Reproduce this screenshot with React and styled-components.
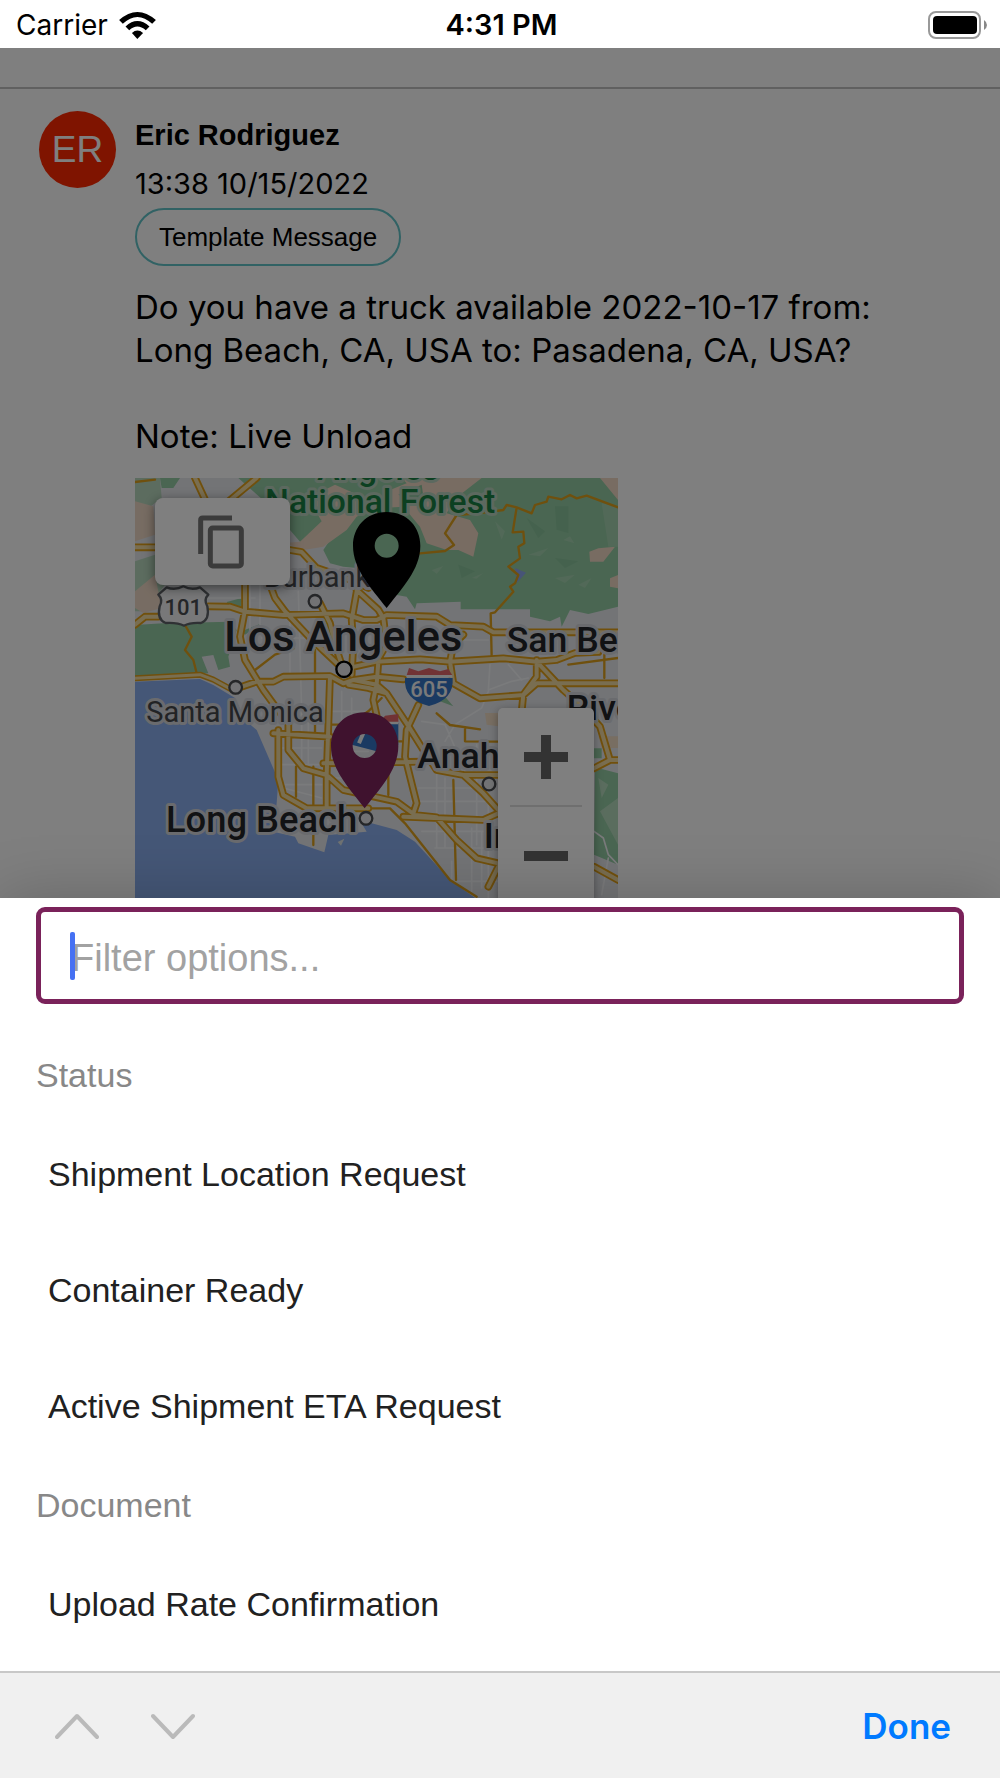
import React, { useState } from 'react';
import styled, { createGlobalStyle } from 'styled-components';

const GlobalStyle = createGlobalStyle`
  * { box-sizing: border-box; }
  body {
    margin: 0;
    background: #fff;
    font-family: "Liberation Sans", Arial, sans-serif;
  }
  button {
    border: none;
    background: none;
    padding: 0;
    font-family: inherit;
    cursor: pointer;
  }
  svg { display: block; }
`;

const Screen = styled.div`
  height: 100vh;
  display: flex;
  flex-direction: column;
  overflow: hidden;
`;

const StatusBar = styled.header`
  flex: none;
  display: grid;
  grid-template-columns: 1fr auto 1fr;
  align-items: center;
  height: 48px;
  padding: 2px 13px 0 16px;
  background: #fff;
  font-family: Inter, sans-serif;
  font-size: 28px;
  line-height: 46px;
`;

const Carrier = styled.div`
  display: flex;
  align-items: center;
  gap: 11px;
`;

const Clock = styled.time`
  font-size: 29px;
  font-weight: 600;
`;

const BatterySlot = styled.div`
  justify-self: end;
`;

const Conversation = styled.main`
  position: relative;
  flex: 1;
  min-height: 0;
  overflow: hidden;
`;

const Backdrop = styled.div`
  position: absolute;
  inset: 0;
  background: rgba(0, 0, 0, 0.5);
`;

const ThreadHeader = styled.div`
  height: 41px;
  border-bottom: 2px solid #c0c0c0;
`;

const Message = styled.article`
  display: flex;
  gap: 19px;
  padding: 22px 80px 22px 39px;
`;

const Avatar = styled.div`
  flex: none;
  width: 77px;
  height: 77px;
  border-radius: 50%;
  background: #ff2800;
  color: #fff;
  font-size: 37px;
  line-height: 77px;
  text-align: center;
`;

const Content = styled.div`
  flex: 1;
  min-width: 0;
  display: flex;
  flex-direction: column;
  align-items: flex-start;
`;

const Author = styled.div`
  font-size: 29px;
  font-weight: 700;
  line-height: 48px;
`;

const Sent = styled.time`
  font-family: Inter, sans-serif;
  font-size: 29px;
  line-height: 49px;
`;

const TemplateTag = styled.button`
  height: 58px;
  padding: 0 22px;
  border: 2px solid #62c4c9;
  border-radius: 29px;
  color: #000;
  font-size: 26px;
`;

const Body = styled.p`
  margin: 20px 0;
  font-family: Inter, sans-serif;
  font-size: 33px;
  line-height: 43px;
  white-space: pre-line;
`;

const MapFrame = styled.div`
  position: relative;
  width: 483px;
  max-width: 100%;
  aspect-ratio: 483 / 448;
  overflow: hidden;

  > svg {
    width: 100%;
    height: 100%;
  }
`;

const CopyButton = styled.button`
  position: absolute;
  top: 20px;
  left: 20px;
  width: 135px;
  height: 87px;
  padding-right: 3px;
  display: grid;
  place-items: center;
  border-radius: 8px;
  background: #fff;
  box-shadow: 0 3px 12px rgba(0, 0, 0, 0.5);
`;

const ZoomControl = styled.div`
  position: absolute;
  right: 24px;
  top: 230px;
  width: 96px;
  border-radius: 5px;
  background: #fff;
  box-shadow: 0 2px 8px rgba(0, 0, 0, 0.35);
`;

const ZoomButton = styled.button`
  display: grid;
  place-items: center;
  width: 100%;
  height: 97px;
`;

const ZoomDivider = styled.div`
  height: 2px;
  margin: 0 12px;
  background: #dedede;
`;

const Sheet = styled.section`
  position: relative;
  flex: none;
  padding: 9px 36px;
  background: #fff;
  box-shadow: 0 0 60px rgba(0, 0, 0, 0.2);
`;

const FilterBox = styled.label`
  position: relative;
  display: block;
  margin-bottom: 30px;
  border: 5px solid #7a225a;
  border-radius: 9px;
`;

const FilterInput = styled.input`
  display: block;
  width: 100%;
  height: 87px;
  padding: 5px 30px 0;
  border: none;
  outline: none;
  background: transparent;
  font-family: inherit;
  font-size: 38px;

  &::placeholder {
    color: #a2a2a2;
    opacity: 1;
  }
`;

const Caret = styled.span`
  position: absolute;
  top: 20px;
  left: 29px;
  width: 5px;
  height: 48px;
  border-radius: 2px;
  background: #4571f3;
`;

const GroupTitle = styled.h2`
  margin: 0;
  color: #888;
  font-size: 34px;
  font-weight: 400;
  line-height: 82px;
`;

const OptionList = styled.ul`
  margin: 0;
  padding: 0;
  list-style: none;
`;

const Option = styled.button`
  display: block;
  width: 100%;
  padding: 0 12px;
  color: #212121;
  font-size: 34px;
  line-height: 116px;
  text-align: left;
`;

const KeyboardBar = styled.footer`
  position: relative;
  flex: none;
  display: flex;
  align-items: center;
  gap: 52px;
  height: 107px;
  padding: 0 49px 0 55px;
  border-top: 2px solid #c8c8c8;
  background: #f0f0f0;
`;

const DoneButton = styled.button`
  margin-left: auto;
  color: #007aff;
  font-family: Inter, sans-serif;
  font-size: 35px;
  font-weight: 600;
`;

const WifiIcon = () => (
  <svg width="37" height="27" viewBox="0 0 109 80" aria-label="Wi-Fi">
    <path d="M0 24 Q54 -24 109 24 L98 35 Q54 -6 11 35Z" />
    <path d="M19 43 Q54 11 90 43 L79 54 Q54 32 30 54Z" />
    <path d="M38 62 Q54 48 71 62 L54 80Z" />
  </svg>
);

const BatteryIcon = () => (
  <svg width="59" height="28" viewBox="0 0 59 28" aria-label="Battery full">
    <rect x="1" y="1" width="51" height="26" rx="7" fill="none" stroke="#999" strokeWidth="2" />
    <rect x="5" y="5" width="44" height="18" rx="4" />
    <path d="M56 9 Q59 11 59 14 Q59 17 56 19Z" fill="#888" />
  </svg>
);

const CopyIcon = () => (
  <svg width="46" height="54" viewBox="0 0 138 160" fill="none" stroke="#777" strokeWidth="15">
    <path d="M102 8 H14 Q8 8 8 14 V116" />
    <rect x="37" y="38" width="93" height="114" rx="7" />
  </svg>
);

const PlusIcon = () => (
  <svg width="44" height="44" viewBox="0 0 44 44" fill="#666">
    <path d="M17 0h10v17h17v10H27v17H17V27H0V17h17z" />
  </svg>
);

const MinusIcon = () => (
  <svg width="44" height="10" viewBox="0 0 44 10" fill="#666">
    <path d="M0 0h44v10H0z" />
  </svg>
);

const Chevron = ({ d }) => (
  <svg width="44" height="28" viewBox="0 0 44 28" fill="none" stroke="#bababa" strokeWidth="4" strokeLinecap="round" strokeLinejoin="round">
    <path d={d} />
  </svg>
);

const highways = [
  'M0 208 H90 M465 216 L500 222 L545 270 L620 295 L700 330',
  'M405 320 L420 360 L450 400 L525 480 L610 560',
  'M285 386 L330 401 L445 411 L625 406 L685 426 L725 426 L755 411 L905 416 L945 441 L1045 446 L1075 463 H1449',
  'M0 440 L30 416 L70 416 M220 385 L285 386',
  'M330 320 V396 L315 476 L330 546 L385 636 L425 691 L460 736 V816 L505 871 L575 891 L625 936 L690 950 L785 971 L840 1011 L905 1018 L965 1086 L1025 1141 L1090 1156',
  'M305 631 L365 611 H415 L445 596 L585 594 L625 616 L655 606 L725 596 L805 604',
  'M635 571 L725 551 L855 544 L945 551 L1105 541 L1205 551 L1265 546 L1320 525 L1390 522',
  'M555 376 L585 436 L600 500 L620 560',
  'M585 596 L575 891 V996',
  'M655 606 L725 620 L755 646 L815 736 L865 816 L905 876 L985 891 H1090 M985 891 L1045 946 L1090 996',
  'M725 616 L715 666 L735 760',
  'M850 681 L815 756 L810 836 L845 976 L835 1006',
  'M985 470 L955 500 L945 551 L955 616 L1035 661 L1165 651 L1205 616 H1449',
  'M755 646 L700 630 L640 620',
  'M415 766 L585 776 M565 856 L865 851',
  'M805 1016 L1045 1026 L1090 1006',
  'M1205 546 L1205 596 L1165 650 L1160 700 M1205 551 L1285 636 L1345 690 L1395 746 L1425 846',
  'M1377 871 L1425 846 H1449 M1377 1166 L1449 1206 M1090 1166 L1060 1226',
  'M180 0 L215 75 M365 0 L275 75',
  'M665 341 L650 426 L655 500 L650 590 M665 336 L730 395 L745 420',
  'M730 551 L725 620 M725 551 L755 500 L745 420',
  'M430 756 V896 L445 951 L515 991 H700',
];

const arterials = [
  'M855 226 L930 219 L957 201 L930 166 L965 111 L1030 106 L1105 96 L1115 81 L1145 88 L1190 106 L1200 81 L1235 71 L1240 56 L1280 64 L1305 51 L1325 61 L1355 53 L1449 88',
  'M1145 88 L1133 163 L1165 161 L1168 196 L1150 206 L1155 241 L1120 266 L1150 291 L1140 316 L1125 326 L1135 341 L1080 403 L1067 406 L1070 536',
  'M150 441 L170 476 L150 516 L175 546 L185 586',
  'M0 12 L60 5 M360 576 L420 530 L475 512 M540 516 V766 M700 991 H765 L810 1036 L945 1206 L1025 1256',
  'M483 866 V956 M535 866 V980 M535 1046 V1101 M955 906 L963 1206 M760 866 V951',
  'M905 706 L945 741 L1035 754 M990 754 V790 L1090 791 M1408 530 V600 M1300 560 L1449 540',
  'M700 790 H800 M740 660 L700 700 L640 740 M585 740 H680',
];

const streets = [
  'M345 320 V470 M375 320 V460 M215 360 H360 M465 400 V600 M490 340 L500 700 M380 480 H620',
  'M430 810 H560 M430 860 H560 M440 920 H560 M445 930 L560 960 M500 680 V870 M520 700 V860',
  'M620 640 V900 M650 660 V900 M585 700 H700 M585 820 H700 M600 900 H700',
  'M850 486 H1060 M1065 560 L1060 636 L1130 610 L1180 600 M1120 560 L1160 606',
  'M1060 640 L1040 690 L960 740 L930 790 M860 730 L930 740 L1000 900',
  'M905 890 V1110 M930 900 V1110 M1025 800 V1100 M1060 950 V1260 M850 930 H1040 M830 970 H1080',
  'M860 1060 H1060 M900 1110 H1090 M950 1150 V1210 M1010 1050 V1240 M1040 1060 V1230 M960 1210 H1090',
  'M1377 1060 L1405 1080 L1420 1130 L1449 1160 M1420 1140 L1400 1250',
];

const cities = [
  { name: 'Burbank', x: 386, y: 328, size: 87 },
  { name: 'Santa Monica', x: 34, y: 731, size: 87 },
  { name: 'Los Angeles', x: 268, y: 519, size: 130, major: true },
  { name: 'San Bernardino', x: 1115, y: 521, size: 107, major: true },
  { name: 'Riverside', x: 1295, y: 726, size: 107, major: true },
  { name: 'Anaheim', x: 847, y: 871, size: 107, major: true },
  { name: 'Long Beach', x: 93, y: 1061, size: 109, major: true },
  { name: 'Irvine', x: 1046, y: 1111, size: 107, major: true },
];

const dots = [[540, 370, 19], [627, 574, 23], [302, 628, 19], [693, 1021, 19], [1062, 918, 19]];

const MapLabel = styled.text`
  font-family: Roboto, sans-serif;
  font-size: ${({ $size }) => $size}px;
  font-weight: ${({ $major }) => ($major ? 500 : 400)};
  fill: ${({ $park, $major }) => ($park ? '#188043' : $major ? '#222428' : '#44464a')};
  stroke: ${({ $park }) => ($park ? '#b8d2be' : '#d4d7dc')};
  stroke-width: 18px;
  stroke-linejoin: round;
  paint-order: stroke;
`;

const ShieldNumber = styled.text`
  font-family: Roboto, sans-serif;
  font-size: 66px;
  font-weight: 500;
  text-anchor: middle;
`;

const Pin = ({ x, y, color }) => (
  <path
    transform={`translate(${x} ${y})`}
    fill={color}
    fillRule="evenodd"
    d="M0 -101 C-62 -101 -101 -55 -101 0 C-101 72 -45 128 0 187 C45 128 101 72 101 0 C101 -55 62 -101 0 -101Z M0 -36 A36 36 0 1 1 0 36 A36 36 0 1 1 0 -36Z"
  />
);

function RouteMap() {
  return (
    <svg viewBox="0 0 1449 1344" role="img" aria-label="Map from Long Beach to Pasadena">
      <rect width="1449" height="1344" fill="#e6e8ec" />

      {/* parks and hills */}
      <path fill="#b9d9bf" d="M0 0 H75 L80 60 L40 90 H0Z M0 250 L60 230 L90 320 L30 400 H0Z" />
      <path fill="#efd9c6" d="M0 70 L55 85 L60 170 L0 190Z M0 340 L60 290 L80 390 L25 405 L0 390Z" />
      <path fill="#94cca4" d="M75 0 H135 L115 30 L80 30Z M0 441 L85 436 L285 431 L305 456 L280 536 L285 566 L250 576 L235 531 L200 536 L220 586 L0 596Z" />
      <path fill="#94cca4" d="M275 372 L320 360 V395 L285 390Z M320 460 L380 436 L330 470Z" />
      <path fill="#94cca4" d="M310 0 H1449 V386 L1360 408 L1305 396 L1280 446 L1275 416 L1245 430 L1185 416 V394 H977 V371 L845 376 L840 394 L815 356 L785 351 L735 276 L625 266 L585 256 L565 216 L585 186 L495 191 L465 156 L400 80Z" />
      <path fill="#f0d8c5" d="M495 191 L450 195 L505 216 L565 206 L635 156 L665 116 L705 96 L765 36 L815 16 L800 0 H1040 L955 66 L935 106 L1005 126 L1030 166 L1015 236 L970 216 L935 216 L875 196 L855 146 L805 86 L740 90 L690 60 L600 20 L520 60 L560 130Z" />
      <path fill="#f0d8c5" d="M1390 211 L1440 206 L1405 251 L1365 251 L1363 221Z M1425 301 L1449 291 V331 L1425 326Z M1395 0 H1449 V66Z" />
      <path fill="#a4d3b0" d="M1400 76 L1449 86 V206 H1420Z M890 276 L925 264 L905 288Z M1010 300 L1045 285 L1025 302Z M1285 186 L1305 175 L1318 196Z M1180 230 L1240 210 L1215 235Z M1260 300 L1320 290 L1290 315Z M1080 130 L1110 160 L1100 185Z M1330 320 L1370 300 L1350 330Z" />
      <path fill="#8ac49c" d="M1260 85 H1300 V165 L1265 155Z M1175 120 L1210 180 L1230 160Z M1260 240 L1330 250 L1290 270Z M970 260 L1020 280 L980 300Z M870 90 L860 20 L790 50Z" />
      <path fill="#94cca4" d="M1377 811 H1400 V841 H1377Z M1380 868 L1449 886 V1160 L1377 1130Z M925 650 L955 685 L915 670Z" />
      <path fill="#b5dabd" d="M1395 1000 L1449 960 V1100Z M1390 900 L1420 920 L1400 960Z" />
      <path fill="#f0dcc4" d="M1050 705 H1090 V745 L1055 740Z M1390 775 H1449 V810 H1400Z" />
      <path fill="#8ea8ef" d="M1140 270 L1173 284 L1145 315Z" />

      {/* ocean */}
      <path fill="#8aaeee" d="M0 611 L195 603 L235 621 L300 660 L330 726 L365 756 L430 906 L425 976 L415 1061 L480 1076 L490 1096 L568 1123 L580 1071 L695 1061 L680 1036 H710 L785 1056 L840 1091 L945 1206 L1025 1263 V1344 H0Z" />
      <path fill="#dfe5e4" d="M608 1092 L628 1082 L618 1103Z" />

      <g fill="none" strokeLinejoin="round" strokeLinecap="round">
        <path d={streets.join(' ')} stroke="#f5f6f8" strokeWidth="5" />
        <path d={arterials.join(' ')} stroke="#dea01c" strokeWidth="7" />
        <path d="M0 601 L195 590 L235 605 L300 640" stroke="#e2a018" strokeWidth="18" />
        <path d={highways.join(' ')} stroke="#e2a018" strokeWidth="23" />
        <path d={highways.join(' ')} stroke="#f3dca2" strokeWidth="12" />
        <path d="M0 601 L195 590 L235 605 L300 640" stroke="#f3dca2" strokeWidth="9" />
      </g>

      {/* route shields */}
      <path fill="#f0f1f3" stroke="#5f6368" strokeWidth="7" strokeLinejoin="round" d="M95 328 Q120 338 145 325 Q170 338 195 328 L220 350 Q205 365 217 385 Q225 425 198 435 Q165 433 147 443 Q128 433 92 435 Q65 425 74 385 Q85 365 70 350Z" />
      <ShieldNumber x="145" y="410" fill="#4a4c50">101</ShieldNumber>
      <path fill="#e2676a" d="M815 592 L822 570 L850 580 L882 570 L915 580 L940 573 L952 592Z M735 732 L750 713 L790 708 V732Z" />
      <path fill="#3474c4" d="M810 600 H953 Q958 665 882 684 Q805 665 810 600Z M650 735 H790 V800 L725 820 L650 800Z" />
      <path stroke="#f4f4f4" strokeWidth="8" d="M815 595 H952 M735 735 H790" />
      <path stroke="#f4f4f4" strokeWidth="12" d="M672 796 L685 765" />
      <ShieldNumber x="882" y="658" fill="#f5f5f5">605</ShieldNumber>

      <MapLabel x="547" y="6" $size={101} $major $park>Angeles</MapLabel>
      <MapLabel x="390" y="106" $size={101} $major $park>National Forest</MapLabel>
      {cities.map(c => (
        <MapLabel key={c.name} x={c.x} y={c.y} $size={c.size} $major={c.major}>{c.name}</MapLabel>
      ))}
      {dots.map(([cx, cy, r]) => (
        <circle key={cx} cx={cx} cy={cy} r={r} fill="#e4e5e8" stroke={r > 20 ? '#000' : '#4a4c50'} strokeWidth="7" />
      ))}

      <Pin x={755} y={203} color="#000" />
      <Pin x={689} y={804} color="#7e245c" />
    </svg>
  );
}

const groups = [
  { title: 'Status', options: ['Shipment Location Request', 'Container Ready', 'Active Shipment ETA Request'] },
  { title: 'Document', options: ['Upload Rate Confirmation'] },
];

const messageText = `Do you have a truck available 2022-10-17 from: Long Beach, CA, USA to: Pasadena, CA, USA?

Note: Live Unload`;

function App() {
  const [filter, setFilter] = useState('');

  return (
    <>
      <GlobalStyle />
      <Screen>
        <StatusBar>
          <Carrier>Carrier <WifiIcon /></Carrier>
          <Clock>4:31 PM</Clock>
          <BatterySlot><BatteryIcon /></BatterySlot>
        </StatusBar>

        <Conversation>
          <ThreadHeader />
          <Message>
            <Avatar>ER</Avatar>
            <Content>
              <Author>Eric Rodriguez</Author>
              <Sent>13:38 10/15/2022</Sent>
              <TemplateTag type="button">Template Message</TemplateTag>
              <Body>{messageText}</Body>
              <MapFrame>
                <RouteMap />
                <CopyButton type="button" aria-label="Copy message"><CopyIcon /></CopyButton>
                <ZoomControl>
                  <ZoomButton type="button" aria-label="Zoom in"><PlusIcon /></ZoomButton>
                  <ZoomDivider />
                  <ZoomButton type="button" aria-label="Zoom out"><MinusIcon /></ZoomButton>
                </ZoomControl>
              </MapFrame>
            </Content>
          </Message>
          <Backdrop />
        </Conversation>

        <Sheet>
          <FilterBox>
            <FilterInput
              type="text"
              aria-label="Filter options"
              placeholder="Filter options..."
              value={filter}
              onChange={e => setFilter(e.target.value)}
            />
            {!filter && <Caret />}
          </FilterBox>
          {groups.map(group => (
            <React.Fragment key={group.title}>
              <GroupTitle>{group.title}</GroupTitle>
              <OptionList>
                {group.options.map(option => (
                  <li key={option}><Option type="button">{option}</Option></li>
                ))}
              </OptionList>
            </React.Fragment>
          ))}
        </Sheet>

        <KeyboardBar>
          <button type="button" aria-label="Previous field"><Chevron d="M2 25 L22 4 L42 25" /></button>
          <button type="button" aria-label="Next field"><Chevron d="M2 4 L22 25 L42 4" /></button>
          <DoneButton type="button">Done</DoneButton>
        </KeyboardBar>
      </Screen>
    </>
  );
}

export default App;
